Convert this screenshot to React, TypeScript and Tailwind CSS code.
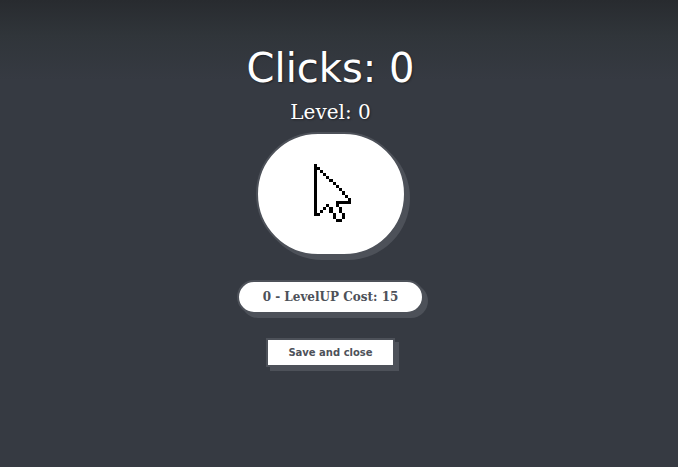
const cursorRows = [
  "X...........",
  "XX..........",
  "X.X.........",
  "X..X........",
  "X...X.......",
  "X....X......",
  "X.....X.....",
  "X......X....",
  "X.......X...",
  "X........X..",
  "X.........X.",
  "X..........X",
  "X......XXXXX",
  "X...X..X....",
  "X..X.X..X...",
  "X.X..X..X...",
  "XX....X..X..",
  "......X..X..",
  ".......XX...",
];

function PixelCursor() {
  return (
    <svg
      viewBox="0 0 12 19"
      preserveAspectRatio="none"
      className="mb-[2px] ml-[3px] h-[58px] w-[37px]"
      shapeRendering="crispEdges"
      aria-hidden="true"
    >
      {cursorRows.flatMap((row, y) =>
        [...row].map((cell, x) =>
          cell === "X" ? (
            <rect key={`${x}-${y}`} x={x} y={y} width="1" height="1" fill="#000" />
          ) : null,
        ),
      )}
    </svg>
  );
}

export default function App() {
  return (
    <main className="flex h-[467px] w-full flex-col items-center overflow-hidden bg-[#363a42] bg-[linear-gradient(to_bottom,#282b2f_0px,#30353a_36px,#363a42_80px)] pr-[17px] text-white">
      <h1 className="mt-[44px] h-12 font-['DejaVu_Sans',sans-serif] text-[40px] leading-[48px] whitespace-nowrap [text-shadow:1px_1px_2px_rgba(0,0,0,0.4)]">
        Clicks: 0
      </h1>
      <p className="mt-2 h-6 font-['DejaVu_Serif',serif] text-[20px] leading-6 whitespace-nowrap [text-shadow:1px_1px_2px_rgba(0,0,0,0.4)]">
        Level: 0
      </p>
      <button
        aria-label="Click"
        className="mt-2 flex h-[124px] w-[150px] shrink-0 items-center justify-center rounded-[62px] border-2 border-[#4d5159] bg-white shadow-[4px_4px_0_#4d5159]"
      >
        <PixelCursor />
      </button>
      <button className="mt-6 h-[34px] w-[187px] shrink-0 rounded-full border-2 border-[#4d5159] bg-white font-['DejaVu_Serif',serif] text-xs font-bold whitespace-nowrap text-[#4d5159] shadow-[4px_4px_0_#4d5159]">
        0 - LevelUP Cost: 15
      </button>
      <button className="mt-6 h-[29px] w-[129px] shrink-0 border-2 border-[#4d5159] bg-white font-['DejaVu_Sans',sans-serif] text-[10px] font-bold whitespace-nowrap text-[#4d5159] shadow-[4px_4px_0_#4d5159]">
        Save and close
      </button>
    </main>
  );
}
